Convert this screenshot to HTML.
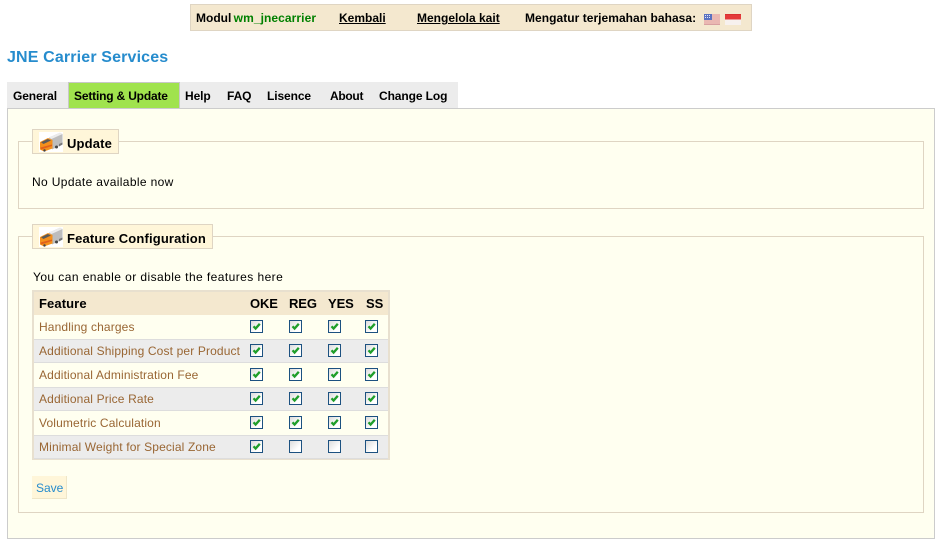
<!DOCTYPE html>
<html><head><meta charset="utf-8"><style>
html,body{margin:0;padding:0;width:941px;height:545px;overflow:hidden;background:#fff}
body{position:relative;font:12px "Liberation Sans",sans-serif;color:#000}
.a{position:absolute;white-space:nowrap}
.b{font-weight:bold}
.box{position:absolute;box-sizing:border-box}
.t{position:absolute;top:89px;font-weight:bold;white-space:nowrap;line-height:14px;letter-spacing:-.1px}
.leg{position:absolute;box-sizing:border-box;background:#fff6d9;border:1px solid #dfd5c3;height:25px}
.lt{position:absolute;font-weight:bold;font-size:13px;letter-spacing:.15px;line-height:15px;white-space:nowrap}
.r{position:absolute;left:39px;color:#996633;line-height:14px;white-space:nowrap;letter-spacing:.14px}
.h{position:absolute;top:296px;font-weight:bold;font-size:13px;letter-spacing:-.1px;line-height:15px;white-space:nowrap}
.c{position:absolute;width:13px;height:13px;box-sizing:border-box;border:1px solid #1c5180;background:linear-gradient(135deg,#dcdcdc,#fff 70%)}
.c svg{position:absolute;left:0;top:0}
.truck{position:absolute;width:24px;height:20px}
</style></head><body>
<svg width="0" height="0" style="position:absolute"><defs>
<symbol id="k" viewBox="0 0 11 11"><path d="M2.500 5.300 4.600 7.500 8.800 2.800" fill="none" stroke="#1f9e2a" stroke-width="2.300"/></symbol>
<symbol id="tr" viewBox="0 0 24 20"><rect width="24" height="20" fill="#fff"/><path d="M10 5.500 21 .8 23.500 2 23.500 12.500 13 17.500Z" fill="#bdbdbd"/><path d="M10 5.500 21 .8 23.500 2 12.500 7Z" fill="#ececec"/><path d="M20 12 23.500 10.500 23.500 12.500 20 14.500Z" fill="#777"/><path d="M1 10 9 6 13.500 8 13.500 16.500 5 19.500 1 17.500Z" fill="#f4901c"/><path d="M2 10.200 8.800 7 12 8.500 4.500 12Z" fill="#5a5a5a"/><path d="M1.500 15.500 13 12.500 13 14 2 17.500Z" fill="#e0601c"/><circle cx="17.500" cy="15" r="1.500" fill="#444"/><circle cx="5.500" cy="18.500" r="1.200" fill="#444"/></symbol>
</defs></svg>
<div class="box" style="left:190px;top:4px;width:562px;height:27px;background:#f4e8cf;border:1px solid #dfd5c3"></div>
<div class="a b" style="left:196px;top:11px;line-height:14px">Modul <span style="color:#008000;margin-left:-1px;letter-spacing:.08px">wm_jnecarrier</span></div>
<div class="a b" style="left:339px;top:11px;line-height:14px;text-decoration:underline">Kembali</div>
<div class="a b" style="left:417px;top:11px;line-height:14px;text-decoration:underline">Mengelola kait</div>
<div class="a b" style="left:525px;top:11px;line-height:14px;letter-spacing:.04px">Mengatur terjemahan bahasa:</div>
<svg class="a" style="left:704px;top:14px" width="16" height="11"><rect width="16" height="11" fill="#f3e6e0"/><path d="M0 1h16M0 3h16M0 5h16M0 7h16M0 9h16" stroke="#e08a84" stroke-width="1"/><rect y="10" width="16" height="1" fill="#d8a0a0"/><rect width="8" height="6" fill="#5a72c0"/><path d="M1 1.500h6M1 3.500h6" stroke="#dfe6fa" stroke-dasharray="1 1"/></svg>
<svg class="a" style="left:725px;top:14px" width="16" height="11"><rect width="16" height="5.500" fill="#e43a3a"/><rect y="0" width="16" height="1" fill="#d83030"/><rect y="5.500" width="16" height="5.500" fill="#f7f1ee"/></svg>

<div class="a b" style="left:7px;top:48px;font-size:16px;line-height:20px;color:#268ccd;letter-spacing:.15px">JNE Carrier Services</div>

<div class="box" style="left:7px;top:82px;width:451px;height:26px;background:#ececec"></div>
<div class="box" style="left:68px;top:82px;width:112px;height:26px;background:#a0e34d;border:1px solid #c8c8c8;border-bottom:0"></div>
<div class="t" style="left:13px">General</div>
<div class="t" style="left:74px;letter-spacing:-.18px">Setting &amp; Update</div>
<div class="t" style="left:185px">Help</div>
<div class="t" style="left:227px">FAQ</div>
<div class="t" style="left:267px">Lisence</div>
<div class="t" style="left:330px;letter-spacing:-.3px">About</div>
<div class="t" style="left:379px">Change Log</div>

<div class="box" style="left:7px;top:108px;width:928px;height:431px;background:#fffff0;border:1px solid #ccc"></div>

<div class="box" style="left:18px;top:141px;width:906px;height:68px;border:1px solid #dfd5c3"></div>
<div class="leg" style="left:32px;top:129px;width:87px"></div>
<svg class="truck" style="left:39px;top:132px"><use href="#tr"/></svg>
<div class="lt" style="left:67px;top:136px">Update</div>
<div class="a" style="left:32px;top:175px;line-height:14px;letter-spacing:.36px">No Update available now</div>

<div class="box" style="left:18px;top:236px;width:906px;height:277px;border:1px solid #dfd5c3"></div>
<div class="leg" style="left:32px;top:224px;width:181px"></div>
<svg class="truck" style="left:39px;top:227px"><use href="#tr"/></svg>
<div class="lt" style="left:67px;top:231px">Feature Configuration</div>
<div class="a" style="left:33px;top:270px;line-height:14px;letter-spacing:.43px">You can enable or disable the features here</div>

<div class="box" style="left:32px;top:290px;width:358px;height:170px;background:#fffff0;border:2px solid #e8e0cf"></div>
<div class="box" style="left:34px;top:292px;width:354px;height:23px;background:#f4e8cf"></div>
<div class="box" style="left:34px;top:339px;width:354px;height:24px;background:#ececec;border-top:1px solid #ddd;border-bottom:1px solid #ddd"></div>
<div class="box" style="left:34px;top:387px;width:354px;height:24px;background:#ececec;border-top:1px solid #ddd;border-bottom:1px solid #ddd"></div>
<div class="box" style="left:34px;top:435px;width:354px;height:24px;background:#ececec;border-top:1px solid #ddd;border-bottom:1px solid #ddd"></div>

<div class="h" style="left:39px;letter-spacing:.1px">Feature</div>
<div class="h" style="left:250px">OKE</div>
<div class="h" style="left:289px">REG</div>
<div class="h" style="left:328px">YES</div>
<div class="h" style="left:366px">SS</div>

<div class="r" style="top:320px">Handling charges</div>
<div class="r" style="top:344px">Additional Shipping Cost per Product</div>
<div class="r" style="top:368px">Additional Administration Fee</div>
<div class="r" style="top:392px">Additional Price Rate</div>
<div class="r" style="top:416px">Volumetric Calculation</div>
<div class="r" style="top:440px">Minimal Weight for Special Zone</div>

<div class="c" style="left:250px;top:320px"><svg width="11" height="11"><use href="#k"/></svg></div>
<div class="c" style="left:289px;top:320px"><svg width="11" height="11"><use href="#k"/></svg></div>
<div class="c" style="left:328px;top:320px"><svg width="11" height="11"><use href="#k"/></svg></div>
<div class="c" style="left:365px;top:320px"><svg width="11" height="11"><use href="#k"/></svg></div>

<div class="c" style="left:250px;top:344px"><svg width="11" height="11"><use href="#k"/></svg></div>
<div class="c" style="left:289px;top:344px"><svg width="11" height="11"><use href="#k"/></svg></div>
<div class="c" style="left:328px;top:344px"><svg width="11" height="11"><use href="#k"/></svg></div>
<div class="c" style="left:365px;top:344px"><svg width="11" height="11"><use href="#k"/></svg></div>

<div class="c" style="left:250px;top:368px"><svg width="11" height="11"><use href="#k"/></svg></div>
<div class="c" style="left:289px;top:368px"><svg width="11" height="11"><use href="#k"/></svg></div>
<div class="c" style="left:328px;top:368px"><svg width="11" height="11"><use href="#k"/></svg></div>
<div class="c" style="left:365px;top:368px"><svg width="11" height="11"><use href="#k"/></svg></div>

<div class="c" style="left:250px;top:392px"><svg width="11" height="11"><use href="#k"/></svg></div>
<div class="c" style="left:289px;top:392px"><svg width="11" height="11"><use href="#k"/></svg></div>
<div class="c" style="left:328px;top:392px"><svg width="11" height="11"><use href="#k"/></svg></div>
<div class="c" style="left:365px;top:392px"><svg width="11" height="11"><use href="#k"/></svg></div>

<div class="c" style="left:250px;top:416px"><svg width="11" height="11"><use href="#k"/></svg></div>
<div class="c" style="left:289px;top:416px"><svg width="11" height="11"><use href="#k"/></svg></div>
<div class="c" style="left:328px;top:416px"><svg width="11" height="11"><use href="#k"/></svg></div>
<div class="c" style="left:365px;top:416px"><svg width="11" height="11"><use href="#k"/></svg></div>

<div class="c" style="left:250px;top:440px"><svg width="11" height="11"><use href="#k"/></svg></div>
<div class="c" style="left:289px;top:440px"></div>
<div class="c" style="left:328px;top:440px"></div>
<div class="c" style="left:365px;top:440px"></div>

<div class="box" style="left:32px;top:476px;width:35px;height:23px;background:#fff6d9;border-right:1px solid #efe6c8;border-bottom:1px solid #efe6c8"></div>
<div class="a" style="left:36px;top:481px;line-height:14px;color:#268ccd">Save</div>
</body></html>
